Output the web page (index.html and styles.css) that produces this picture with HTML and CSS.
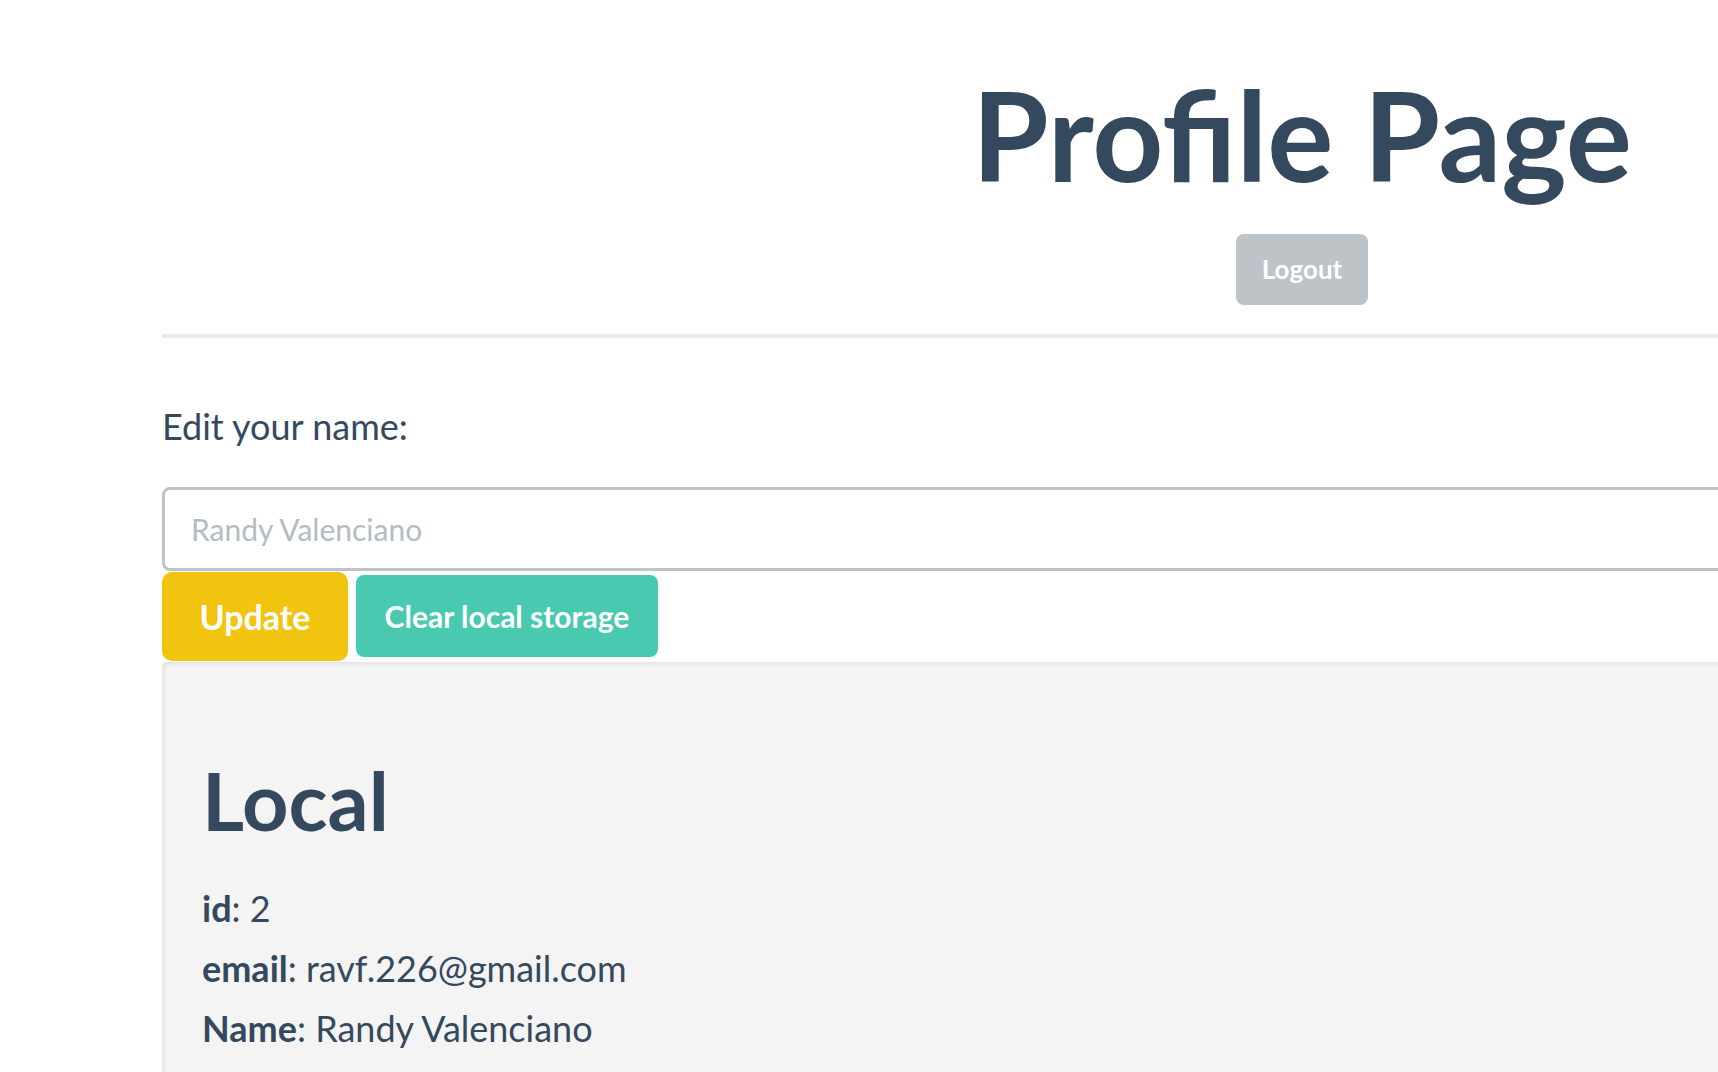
FILE: index.html
```html
<!DOCTYPE html>
<html>
<head>
  <title>Profile Page</title>
  <link rel="stylesheet" href="styles.css">
</head>
<body>
  <div class="container">
    <div class="header">
      <h1 class="title">Profile Page</h1>
      <button class="btn btn-logout">Logout</button>
    </div>
    <hr class="divider">

    <label class="field-label" for="name">Edit your name:</label>
    <input class="name-input" id="name" type="text" placeholder="Randy Valenciano">
    <div class="actions">
      <button class="btn btn-update">Update</button>
      <button class="btn btn-clear">Clear local storage</button>
    </div>

    <div class="local-box">
      <h2 class="local-title">Local</h2>
      <p class="info-row"><b>id</b>: 2</p>
      <p class="info-row"><b>email</b>: ravf.226@gmail.com</p>
      <p class="info-row"><b>Name</b>: Randy Valenciano</p>
    </div>
  </div>
</body>
</html>
```

FILE: styles.css
```css
body {
  margin: 0;
  background: #fff;
  color: #34495e;
  font-family: Lato, "Open Sans", sans-serif;
  overflow: hidden;
}

.container {
  width: 2280px;
  margin-left: 162px;
}

.header {
  display: flex;
  flex-direction: column;
  align-items: center;
  padding-top: 60px;
}

.title {
  margin: 0;
  font-size: 124px;
  font-weight: 700;
  line-height: 1.2;
}

.btn {
  display: inline-flex;
  align-items: center;
  justify-content: center;
  border: none;
  border-radius: 8px;
  color: #fff;
  font-family: Lato, sans-serif;
  cursor: pointer;
}

.btn-logout {
  margin-top: 25px;
  width: 132px;
  height: 71px;
  background-color: #bdc3c7;
  font-size: 26px;
  font-weight: 700;
}

.divider {
  margin: 29px 0 0;
  border: none;
  height: 4px;
  background-color: #e8eaed;
}

.field-label {
  display: block;
  margin-top: 67px;
  font-size: 36px;
  line-height: 1.2;
}

.name-input {
  display: block;
  box-sizing: border-box;
  width: 100%;
  height: 84px;
  margin-top: 39px;
  padding: 0 26px;
  border: 3px solid #bdc3c7;
  border-radius: 8px;
  font-family: Lato, sans-serif;
  font-size: 30px;
  color: #34495e;
  outline: none;
}

.name-input::placeholder {
  color: #b2bcc4;
}

.actions {
  display: flex;
  align-items: center;
  gap: 8px;
  margin-top: 1px;
}

.btn-update {
  width: 186px;
  height: 89px;
  background-color: #f1c40f;
  border-radius: 10px;
  font-size: 34px;
  font-weight: 700;
}

.btn-clear {
  width: 302px;
  height: 82px;
  background-color: #48c9b0;
  font-size: 30px;
  font-weight: 700;
}

.local-box {
  margin-top: 1px;
  padding: 89px 40px 40px;
  min-height: 600px;
  background-color: #f4f4f4;
  border-radius: 5px;
  box-shadow: inset 2px 2px 4px rgba(0, 0, 0, 0.08);
}

.local-title {
  margin: 0 0 30px;
  font-size: 81px;
  font-weight: 700;
  line-height: 1.2;
}

.info-row {
  margin: 0;
  font-size: 36px;
  line-height: 60px;
}

.info-row b {
  font-weight: 700;
}
```
